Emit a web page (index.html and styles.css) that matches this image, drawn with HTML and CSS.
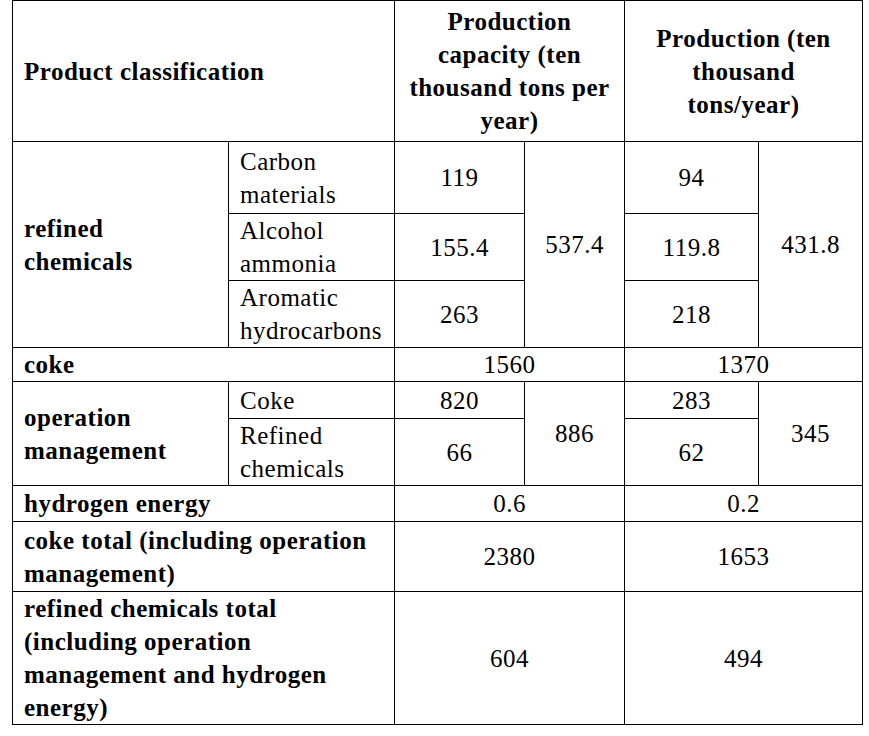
FILE: index.html
```html
<!DOCTYPE html>
<html>
<head>
<meta charset="utf-8">
<link rel="stylesheet" href="styles.css">
</head>
<body>
<table class="tbl">
  <colgroup>
    <col class="c1"><col class="c2"><col class="c3"><col class="c4"><col class="c5"><col class="c6">
  </colgroup>
  <tr class="r-head">
    <th colspan="2" class="left">Product classification</th>
    <th colspan="2">Production capacity (ten thousand tons per year)</th>
    <th colspan="2">Production (ten thousand tons/year)</th>
  </tr>
  <tr class="r1">
    <td rowspan="3" class="left bold">refined chemicals</td>
    <td class="left">Carbon materials</td>
    <td>119</td>
    <td rowspan="3">537.4</td>
    <td>94</td>
    <td rowspan="3">431.8</td>
  </tr>
  <tr class="r2">
    <td class="left">Alcohol ammonia</td>
    <td>155.4</td>
    <td>119.8</td>
  </tr>
  <tr class="r3">
    <td class="left">Aromatic hydrocarbons</td>
    <td>263</td>
    <td>218</td>
  </tr>
  <tr class="r4">
    <td colspan="2" class="left bold">coke</td>
    <td colspan="2">1560</td>
    <td colspan="2">1370</td>
  </tr>
  <tr class="r5">
    <td rowspan="2" class="left bold">operation management</td>
    <td class="left">Coke</td>
    <td>820</td>
    <td rowspan="2">886</td>
    <td>283</td>
    <td rowspan="2">345</td>
  </tr>
  <tr class="r6">
    <td class="left">Refined chemicals</td>
    <td>66</td>
    <td>62</td>
  </tr>
  <tr class="r7">
    <td colspan="2" class="left bold">hydrogen energy</td>
    <td colspan="2">0.6</td>
    <td colspan="2">0.2</td>
  </tr>
  <tr class="r8">
    <td colspan="2" class="left bold">coke total (including operation management)</td>
    <td colspan="2">2380</td>
    <td colspan="2">1653</td>
  </tr>
  <tr class="r9">
    <td colspan="2" class="left bold">refined chemicals total (including operation management and hydrogen energy)</td>
    <td colspan="2">604</td>
    <td colspan="2">494</td>
  </tr>
</table>
</body>
</html>
```
FILE: styles.css
```css
html, body {
  margin: 0;
  padding: 0;
  background: #ffffff;
}
body {
  font-family: "Liberation Serif", "DejaVu Serif", serif;
  color: #000;
}
.tbl {
  margin-left: 12px;
  border-collapse: collapse;
  table-layout: fixed;
  width: 850px;
  font-family: "Liberation Serif", "DejaVu Serif", serif;
  font-size: 25px;
  line-height: 33px;
  letter-spacing: 0.5px;
}
.c1 { width: 216px; }
.c2 { width: 166px; }
.c3 { width: 130px; }
.c4 { width: 100px; }
.c5 { width: 134px; }
.c6 { width: 104px; }
.tbl th, .tbl td {
  border: 1px solid #000;
  padding: 0 8px;
  text-align: center;
  vertical-align: middle;
  font-family: "Liberation Serif", "DejaVu Serif", serif;
}
.tbl th { font-weight: bold; }
.tbl .left { text-align: left; padding-left: 11px; }
.tbl .bold { font-weight: bold; padding-right: 16px; }
.r-head { height: 141px; }
.r1 { height: 72px; }
.r2 { height: 67px; }
.r3 { height: 67px; }
.r4 { height: 34px; }
.r5 { height: 37px; }
.r6 { height: 67px; }
.r7 { height: 36px; }
.r8 { height: 70px; }
.r9 { height: 133px; }
```
